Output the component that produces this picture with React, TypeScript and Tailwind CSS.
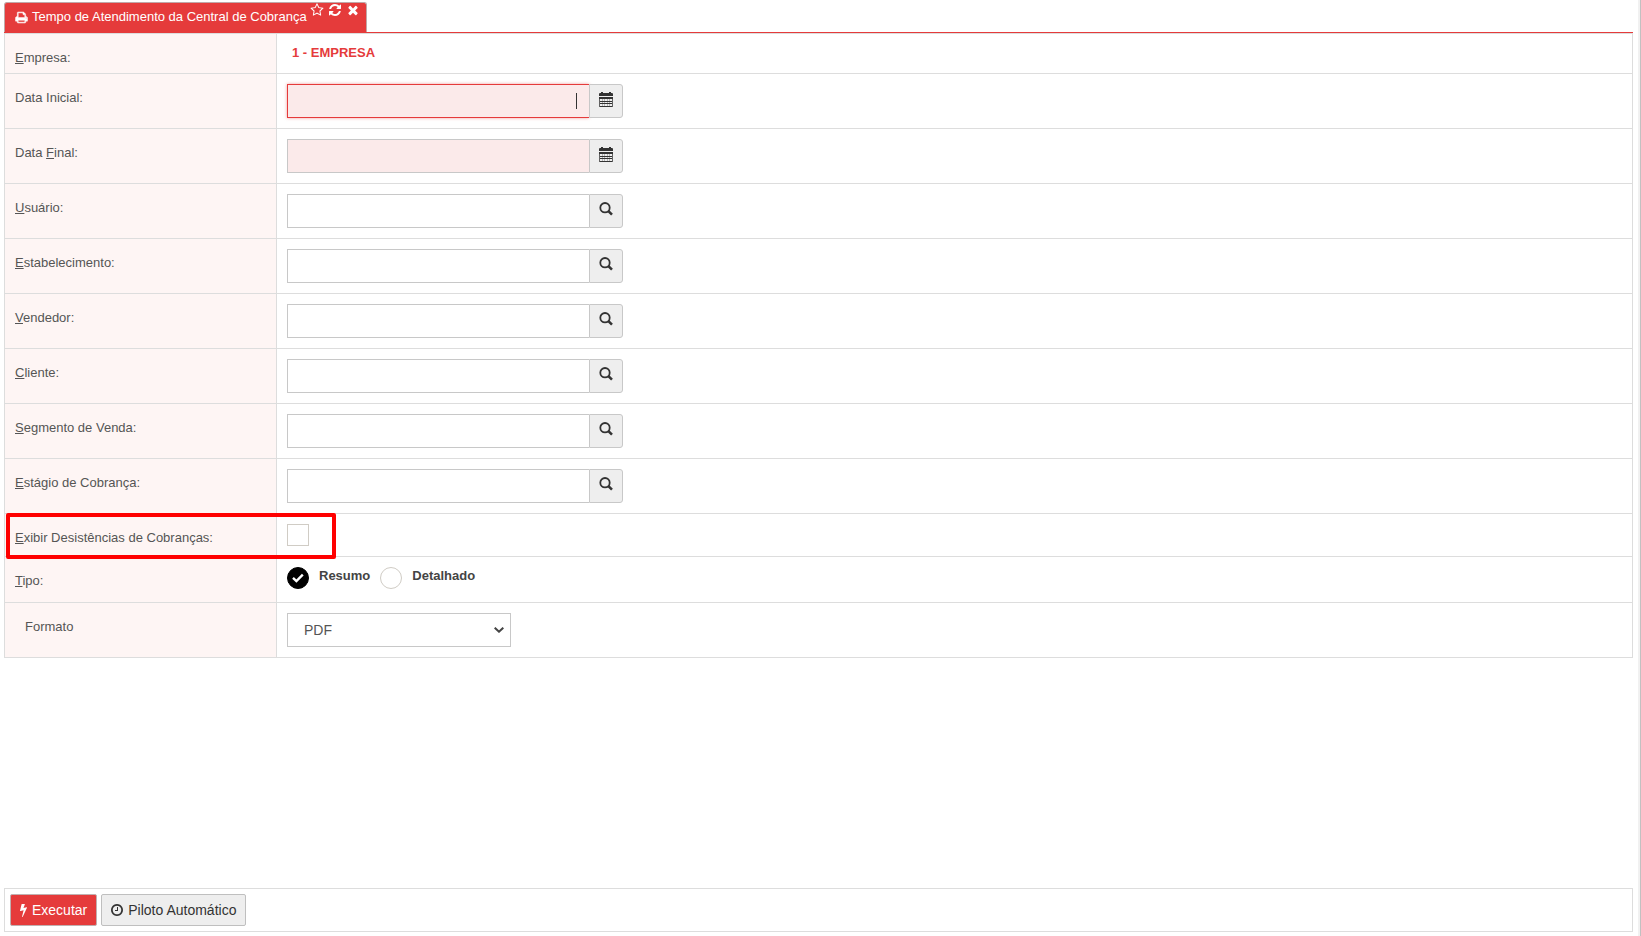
import { useState, type ReactNode } from "react";

const PRINT =
  "M448 1536h896v-256h-896v256zm0-640h896v-384h-160q-40 0-68-28t-28-68v-160h-640v640zm1152 64q0-26-19-45t-45-19-45 19-19 45 19 45 45 19 45-19 19-45zm128 0v416q0 13-9.5 22.5t-22.5 9.5h-224v160q0 40-28 68t-68 28h-960q-40 0-68-28t-28-68v-160h-224q-13 0-22.5-9.5t-9.5-22.5v-416q0-79 56.5-135.5t135.5-56.5h64v-544q0-40 28-68t68-28h672q40 0 88 20t76 48l152 152q28 28 48 76t20 88v256h64q79 0 135.5 56.5t56.5 135.5z";
const STAR =
  "M1201 1004l306-297-422-62-189-382-189 382-422 62 306 297-73 421 378-199 377 199zm527-357q0 22-26 48l-363 354 86 500q1 7 1 20 0 50-41 50-19 0-40-12l-449-236-449 236q-22 12-40 12-21 0-31.5-14.5t-10.5-35.5q0-6 2-20l86-500-364-354q-25-27-25-48 0-37 56-46l502-73 225-455q19-41 49-41t49 41l225 455 502 73q56 9 56 46z";
const REFRESH =
  "M1639 1056q0 5-1 7-64 268-268 434.5t-478 166.5q-146 0-282.5-55t-243.5-157l-129 129q-19 19-45 19t-45-19-19-45v-448q0-26 19-45t45-19h448q26 0 45 19t19 45-19 45l-137 137q71 66 161 102t187 36q134 0 250-65t186-179q11-17 53-117 8-23 30-23h192q13 0 22.5 9.5t9.5 22.5zm25-800v448q0 26-19 45t-45 19h-448q-26 0-45-19t-19-45 19-45l138-138q-148-137-349-137-134 0-250 65t-186 179q-11 17-53 117-8 23-30 23h-199q-13 0-22.5-9.5t-9.5-22.5v-7q65-268 270-434.5t480-166.5q146 0 284 55.5t245 156.5l130-129q19-19 45-19t45 19 19 45z";
const CLOSE =
  "M1490 1322q0 40-28 68l-136 136q-28 28-68 28t-68-28l-294-294-294 294q-28 28-68 28t-68-28l-136-136q-28-28-28-68t28-68l294-294-294-294q-28-28-28-68t28-68l136-136q28-28 68-28t68 28l294 294 294-294q28-28 68-28t68 28l136 136q28 28 28 68t-28 68l-294 294 294 294q28 28 28 68z";
const BOLT =
  "M1333 566q18 20 7 44l-540 1157q-13 25-42 25-4 0-14-2-17-5-25.5-19t-4.5-30l197-808-406 101q-4 1-12 1-18 0-31-11-18-15-13-39l201-825q4-14 16-23t28-9h328q19 0 32 12.5t13 29.5q0 8-5 18l-171 463 396-98q8-2 12-2 19 0 34 15z";
const CLOCK =
  "M1024 544v448q0 14-9 23t-23 9h-320q-14 0-23-9t-9-23v-64q0-14 9-23t23-9h224v-352q0-14 9-23t23-9h64q14 0 23 9t9 23zm416 352q0-148-73-273t-198-198-273-73-273 73-198 198-73 273 73 273 198 198 273 73 273-73 198-198 73-273zm224 0q0 209-103 385.5t-279.5 279.5-385.5 103-385.5-103-279.5-279.5-103-385.5 103-385.5 279.5-279.5 385.5-103 385.5 103 279.5 279.5 103 385.5z";

function Glyph({ path, box = "0 0 1792 1792", className = "size-[14px]" }: { path: string; box?: string; className?: string }) {
  return (
    <svg viewBox={box} className={className} fill="currentColor" aria-hidden="true">
      <path d={path} />
    </svg>
  );
}

function CalendarIcon() {
  return (
    <svg viewBox="0 0 14 15" className="h-[15px] w-[14px]" fill="currentColor" aria-hidden="true">
      <path d="M2 0h2v1h6V0h2v1h1.3l.7.7V4H0V1.700L.7 1H2z" />
      <path d="M0 5h14v2H0zM1 9h12v1H1zM1 11h12v1H1zM1 14h12v1H1z" />
      <path d="M0 7h1v8H0zM13 7h1v8h-1z" opacity=".75" />
      <path d="M3 7h1v7H3zM5 7h1v7H5zM8 7h1v7H8zM10 7h1v7h-1z" opacity=".3" />
    </svg>
  );
}

function SearchIcon() {
  return (
    <svg viewBox="0 0 14 14" className="size-[14px]" fill="none" stroke="currentColor" aria-hidden="true">
      <circle cx="6" cy="5.7" r="4.7" strokeWidth="1.8" />
      <path d="M9.300 9l3.700 3.600" strokeWidth="2.5" />
    </svg>
  );
}

type Kind = "date" | "search";
type Field = { id: string; before?: string; key?: string; after: string; kind: Kind };

const fields: Field[] = [
  { id: "data-inicial", after: "Data Inicial:", kind: "date" },
  { id: "data-final", before: "Data ", key: "F", after: "inal:", kind: "date" },
  { id: "usuario", key: "U", after: "suário:", kind: "search" },
  { id: "estabelecimento", key: "E", after: "stabelecimento:", kind: "search" },
  { id: "vendedor", key: "V", after: "endedor:", kind: "search" },
  { id: "cliente", key: "C", after: "liente:", kind: "search" },
  { id: "segmento", key: "S", after: "egmento de Venda:", kind: "search" },
  { id: "estagio", key: "E", after: "stágio de Cobrança:", kind: "search" },
];

function Row({ label, children }: { label: ReactNode; children: ReactNode }) {
  return (
    <div className="flex border-b border-[#dddddd]">
      <div className="w-[272px] shrink-0 border-r border-[#dddddd] bg-[#fef5f4] px-[10px] pt-[14px] leading-5">{label}</div>
      <div className="min-w-0 flex-1 p-[10px]">{children}</div>
    </div>
  );
}

function LookupField({ field }: { field: Field }) {
  const [value, setValue] = useState("");
  const first = field.id === "data-inicial";
  const tone = first
    ? "border-[#e53b3b] bg-[#fbeaea] shadow-[0_0_3px_#e53b3b80]"
    : field.kind === "date"
      ? "border-[#c8c8c8] bg-[#fbeaea]"
      : "border-[#c8c8c8] bg-white";
  return (
    <div className="flex h-[34px] w-[336px] max-w-full">
      <div className={`flex min-w-0 flex-1 items-center border border-r-0 pr-3 ${tone}`}>
        <input
          id={field.id}
          value={value}
          onChange={(e) => setValue(e.target.value)}
          className="h-full min-w-0 flex-1 bg-transparent px-2 text-right text-sm outline-none"
        />
        {first && <span className="h-4 w-px bg-[#333333]" />}
      </div>
      <button
        type="button"
        aria-label={field.kind === "date" ? "Abrir calendário" : "Pesquisar"}
        className="flex w-[34px] justify-center rounded-r-[3px] border border-[#c8c8c8] bg-[#eeeeee] pt-[7px] text-[#333333]"
      >
        {field.kind === "date" ? <CalendarIcon /> : <SearchIcon />}
      </button>
    </div>
  );
}

export default function App() {
  const [tipo, setTipo] = useState("Resumo");
  return (
    <div className="flex min-h-screen bg-white font-['Liberation_Sans',Arial,sans-serif] text-[13px] text-[#555555]">
      <div className="flex min-w-0 flex-1 flex-col pt-[2px] pr-[5px] pb-1 pl-1">
        <header className="flex border-b border-[#e53b3b]">
          <div className="flex h-[30px] items-start rounded-t-[3px] border border-b-0 border-[#c0a8a8] bg-[#e53b3b] pr-[6px] pl-[10px] text-white">
            <h1 className="flex items-center gap-1 pt-1 leading-5 font-medium">
              <Glyph path={PRINT} className="size-[13px] stroke-white stroke-[60]" />
              Tempo de Atendimento da Central de Cobrança
            </h1>
            <div className="flex gap-1 pl-[3px]">
              <button type="button" aria-label="Favoritar"><Glyph path={STAR} /></button>
              <button type="button" aria-label="Atualizar"><Glyph path={REFRESH} /></button>
              <button type="button" aria-label="Fechar"><Glyph path={CLOSE} /></button>
            </div>
          </div>
        </header>

        <main className="border border-b-0 border-[#dddddd]">
          <Row label={<><u>E</u>mpresa:</>}>
            <div className="h-[19px] pl-[5px] leading-[18px] font-bold text-[#e53b3b]">1 - EMPRESA</div>
          </Row>
          {fields.map((f) => (
            <Row
              key={f.id}
              label={
                <label htmlFor={f.id}>
                  {f.before}
                  {f.key && <u>{f.key}</u>}
                  {f.after}
                </label>
              }
            >
              <LookupField field={f} />
            </Row>
          ))}
          <div className="relative">
            <Row label={<label htmlFor="desistencias"><u>E</u>xibir Desistências de Cobranças:</label>}>
              <input
                id="desistencias"
                type="checkbox"
                className="block size-[22px] appearance-none border border-[#d0ccc5] bg-white checked:bg-black"
              />
            </Row>
            <div className="pointer-events-none absolute -top-px left-px h-[46px] w-[330px] rounded-[2px] border-4 border-[#ff0000]" />
          </div>
          <Row label={<><u>T</u>ipo:</>}>
            <div className="flex h-[25px] gap-[10px]">
              {["Resumo", "Detalhado"].map((name) => (
                <label key={name} className="flex gap-[10px] leading-[18px] font-bold text-[#444444]">
                  <span className="grid size-[22px]">
                    <input
                      type="radio"
                      name="tipo"
                      value={name}
                      checked={tipo === name}
                      onChange={() => setTipo(name)}
                      className="col-start-1 row-start-1 size-[22px] appearance-none rounded-full border border-[#d0ccc5] bg-white checked:border-black checked:bg-black"
                    />
                    {tipo === name && (
                      <svg viewBox="0 0 22 22" className="pointer-events-none z-10 col-start-1 row-start-1 size-[22px]" fill="none" stroke="white" strokeWidth="2.4" aria-hidden="true">
                        <path d="M6 10.800l3.400 3.200L15.800 7.600" />
                      </svg>
                    )}
                  </span>
                  {name}
                </label>
              ))}
            </div>
          </Row>
          <Row label={<label htmlFor="formato" className="pl-[10px]">Formato</label>}>
            <div className="grid h-[34px] w-[224px] max-w-full items-center">
              <select id="formato" className="col-start-1 row-start-1 h-[34px] appearance-none border border-[#c8c8c8] bg-white pl-4 text-sm">
                <option>PDF</option>
              </select>
              <svg viewBox="0 0 10 6" className="pointer-events-none col-start-1 row-start-1 mr-[7px] h-[6px] w-[10px] justify-self-end" fill="none" stroke="#444444" strokeWidth="2" aria-hidden="true">
                <path d="M.7.7L5 4.700 9.300.7" />
              </svg>
            </div>
          </Row>
        </main>

        <footer className="mt-auto flex gap-1 border border-[#dddddd] p-[5px] text-[14px]">
          <button type="button" className="flex h-8 items-center gap-[5px] rounded-[2px] border border-[#c0b0b0] bg-[#e53b3b] px-[9px] text-white">
            <Glyph path={BOLT} box="448 0 896 1792" className="h-[14px] w-[7px]" />
            Executar
          </button>
          <button type="button" className="flex h-8 items-center gap-[5px] rounded-[2px] border border-[#bfbfbf] bg-[#eeeeee] px-[9px] text-[#333333]">
            <Glyph path={CLOCK} box="128 0 1536 1792" className="h-[14px] w-3" />
            Piloto Automático
          </button>
        </footer>
      </div>
      <div className="w-[3px] border-r border-[#c1c1c1] bg-[#f1f1f1]" />
    </div>
  );
}
